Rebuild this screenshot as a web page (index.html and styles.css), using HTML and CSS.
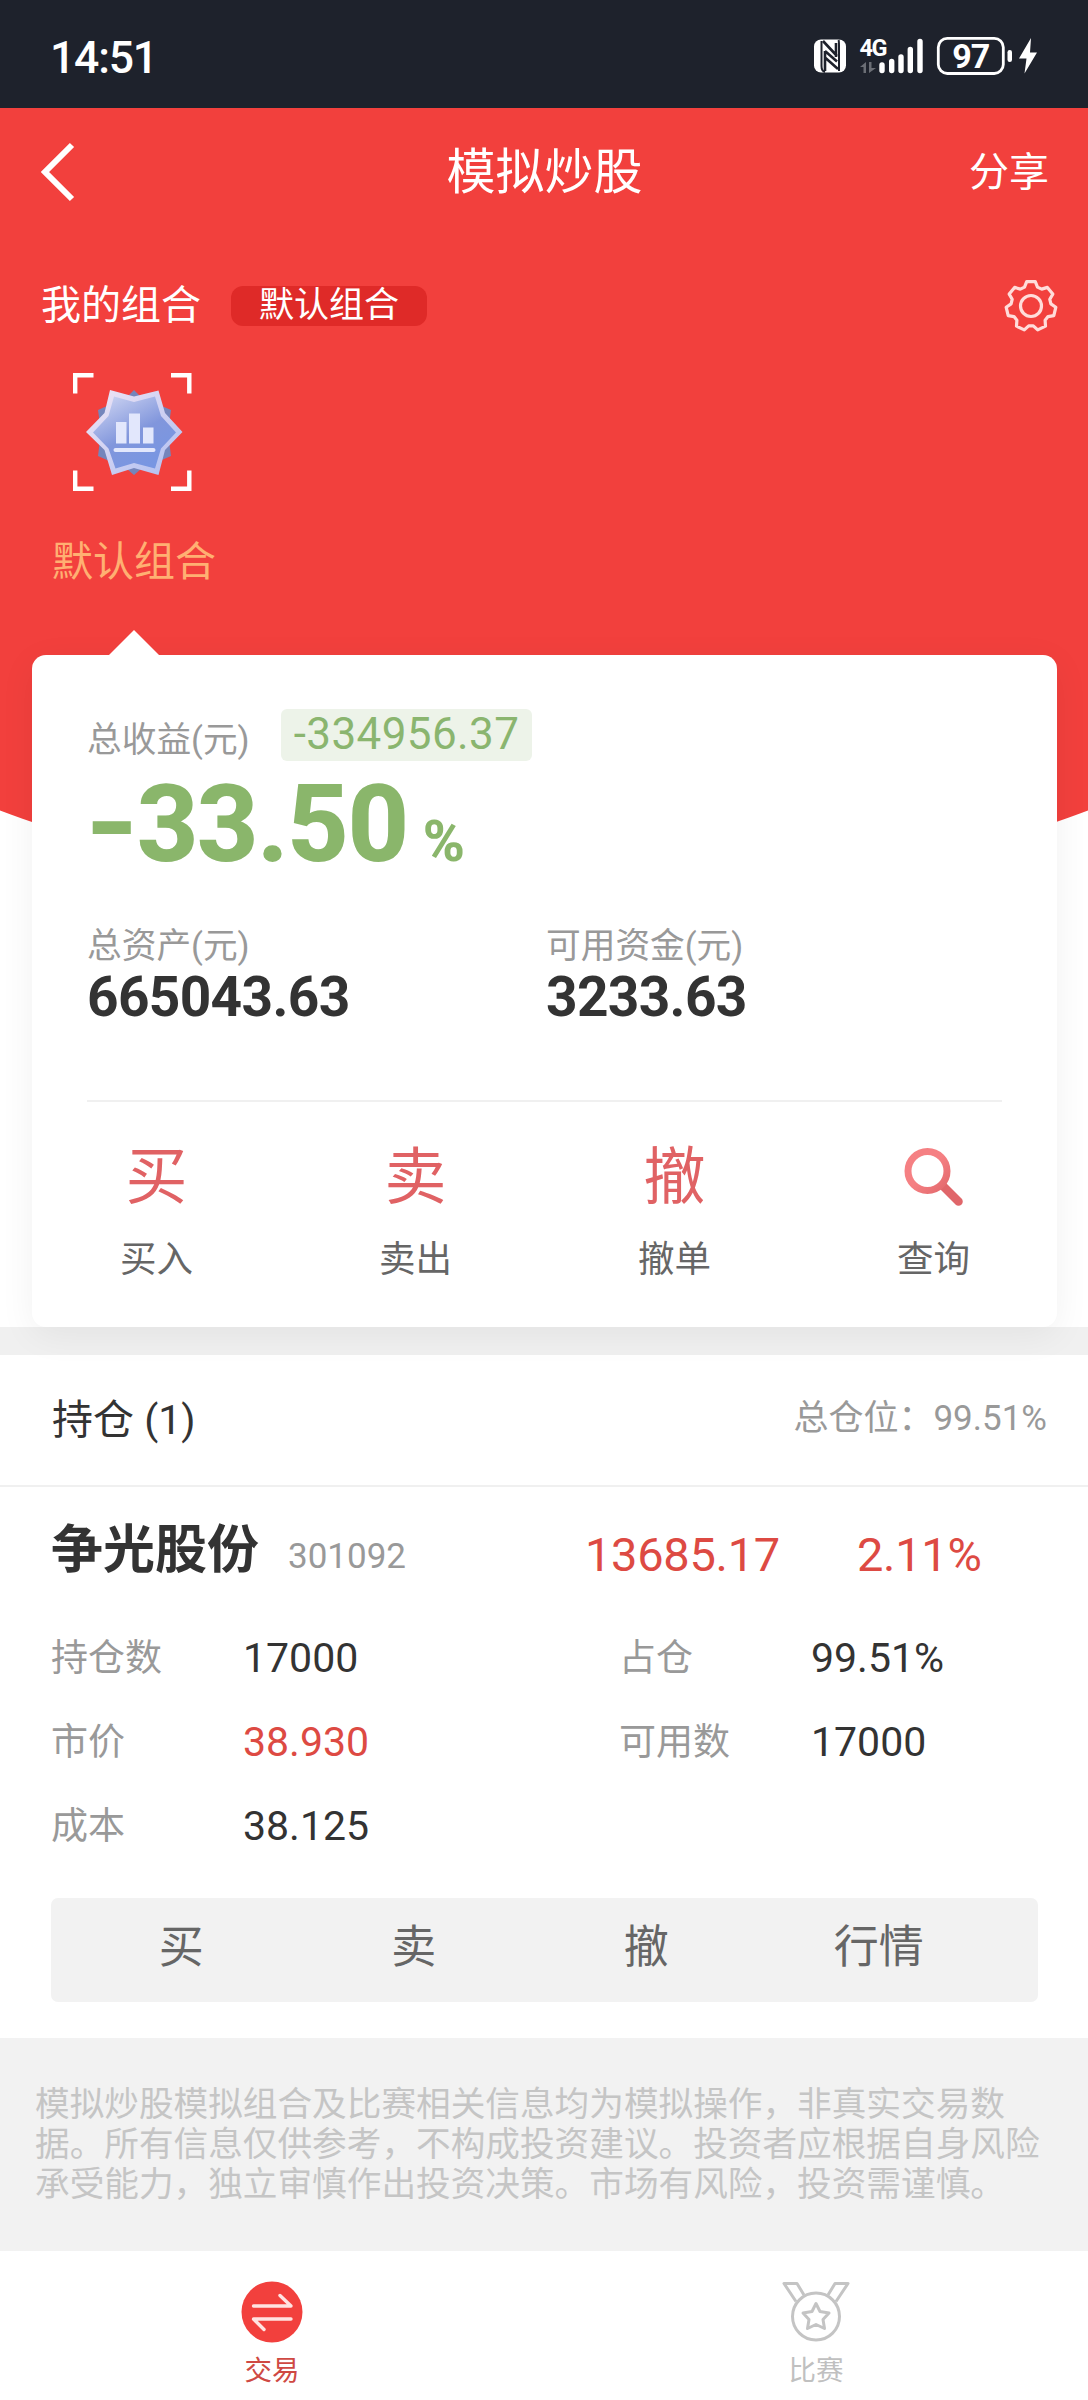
FILE: index.html
```
<!DOCTYPE html>
<html lang="zh-CN">
  <head>
    <meta charset="utf-8">
    <title>模拟炒股</title>
    <meta name="viewport" content="width=device-width, initial-scale=1.0">
    <link rel="stylesheet" href="styles.css">
  </head>
  <body>
    <div class="mainbody">
      <div class="statusbar">
        <span class="clock">14:51</span>
        <svg class="statusicons" width="228" height="50" viewBox="811 31 228 50">
          <!-- nfc -->
          <rect x="814" y="39.500" width="32" height="33" rx="7" fill="#fff"/>
          <path d="M821.500 41V66Q821.500 71 825 72M838.500 40Q839 41 839 46V71" stroke="#1e222c" stroke-width="2" fill="none"/>
          <path d="M823 41L837 56M825 51V71M825 51L837 61.500M825 57.500L838 69M836 43V57" stroke="#1e222c" stroke-width="2.600" fill="none"/>
          <!-- signal -->
          <text x="859.500" y="56" class="net">4G</text>
          <path d="M860 67L866 62V73H863.500V67ZM869 62H871.500V68H876L869 73Z" fill="#6b6e75"/>
          <path d="M882 65V70.500M891.700 61.500V70.500M901 57V70.500M910.300 49.500V70.500M920 41.500V70.500" stroke="#fff" stroke-width="5.400" stroke-linecap="round"/>
          <!-- battery -->
          <rect x="938.300" y="38.300" width="65" height="35.200" rx="9" fill="none" stroke="#fff" stroke-width="2.800"/>
          <rect x="1007.500" y="50" width="4.500" height="12" rx="2.200" fill="#fff"/>
          <text x="970.800" y="68" class="level">97</text>
          <path d="M1031 38L1019 58.500H1026.500L1024.500 73.500L1037 52.500H1030Z" fill="#fff"/>
        </svg>
      </div>

      <div class="hero">
        <div class="header">
          <svg class="back" width="36" height="60" viewBox="0 0 36 60"><path d="M32 3L5 30L32 57" fill="none" stroke="#fff" stroke-width="6"/></svg>
          <div class="title">模拟炒股</div>
          <div class="share">分享</div>
        </div>
        <div class="mygroup">
          <span class="grouptitle">我的组合</span>
          <span class="grouptag">默认组合</span>
          <svg class="gear" width="54" height="54" viewBox="-27 -27 54 54" fill="none" stroke="#ffdcda" stroke-width="3.200">
            <circle r="10.500"/>
            <path stroke-linejoin="round" d="M-4.300 -24.400H4.300L6.500 -18.900L10.700 -16.900L16.400 -18.600L21.800 -11.900L18.800 -6.700L19.900 -2.100L24.800 1.300L22.800 9.600L17 10.600L14.100 14.200L14.500 20.100L6.700 23.900L2.300 19.900H-2.300L-6.700 23.900L-14.500 20.100L-14.100 14.200L-17 10.600L-22.800 9.600L-24.800 1.300L-19.900 -2.100L-18.800 -6.700L-21.800 -11.900L-16.400 -18.600L-10.700 -16.900L-6.500 -18.900Z"/>
          </svg>
        </div>
        <div class="groupitem">
          <svg width="124" height="120" viewBox="71 372 124 120">
            <defs>
              <linearGradient id="face" x1="0" y1="0" x2=".6" y2="1"><stop offset="0" stop-color="#d5daf4"/><stop offset=".6" stop-color="#8196dc"/><stop offset="1" stop-color="#7896e2"/></linearGradient>
              <linearGradient id="rim" x1="0" y1="0" x2="1" y2="1"><stop offset="0" stop-color="#f2e6f5"/><stop offset="1" stop-color="#adbdf0"/></linearGradient>
            </defs>
            <path d="M92.500 375.200H74.200V393.500M170 375.200H188.300V393.500M74.200 470.500V488.800H92.500M188.300 470.500V488.800H170" fill="none" stroke="#fff" stroke-width="4.400"/>
            <path d="M133 390L140 397L170 410L167 432L170 456L140 469L133 475L126 469L97 456L100 432L97 410L126 397Z" fill="#7585bb"/>
            <path d="M109 390L133 396.500L157.500 390.500L164 413L181.500 432L164 450L157.500 475L133 468L111 475L103.500 450L85 432L103.500 413Z" fill="url(#rim)"/>
            <path d="M113 396.500L133 402L154 396.500L160 416L175 432.500L160 448.500L154 468.500L133 463L114.500 468.500L107.500 448.500L92 432.500L107.500 416Z" fill="url(#face)"/>
            <path d="M115 422H125.500V443.500H115ZM128 413.500H139V443.500H128ZM142 427.500H152.500V443.500H142Z" fill="#e2e7fc"/>
            <path d="M114.500 450H152.500" stroke="#e2e7fc" stroke-width="4" stroke-linecap="round"/>
          </svg>
          <span class="groupname">默认组合</span>
        </div>
      </div>

      <div class="card">
        <div class="profitrow">
          <span class="label">总收益(元)</span>
          <span class="profit">-334956.37</span>
        </div>
        <div class="rate"><span class="ratenum"><span class="sign">-</span>33.50</span><span class="percent">%</span></div>
        <div class="assets">
          <div>
            <div class="label">总资产(元)</div>
            <div class="money">665043.63</div>
          </div>
          <div>
            <div class="label">可用资金(元)</div>
            <div class="money">3233.63</div>
          </div>
        </div>
        <div class="actions">
          <div class="action"><span class="glyph">买</span><span class="name">买入</span></div>
          <div class="action"><span class="glyph">卖</span><span class="name">卖出</span></div>
          <div class="action"><span class="glyph">撤</span><span class="name">撤单</span></div>
          <div class="action">
            <span class="glyph">
              <svg width="62" height="62" viewBox="0 2 62 62" fill="none">
                <defs><linearGradient id="lens" x1="0" y1="0" x2="1" y2="1"><stop offset=".5" stop-color="#f58083"/><stop offset="1" stop-color="#e2686c"/></linearGradient></defs>
                <path d="M40 41L55.500 56.500" stroke="#e0666a" stroke-width="8.500" stroke-linecap="round"/>
                <circle cx="24.500" cy="26" r="19.500" stroke="url(#lens)" stroke-width="7"/>
              </svg>
            </span>
            <span class="name">查询</span>
          </div>
        </div>
      </div>

      <div class="holdhead">
        <span class="holdtitle">持仓 (1)</span>
        <span class="holdrate">总仓位：99.51%</span>
      </div>
      <div class="stock">
        <div class="stockhead">
          <span class="stockname">争光股份</span>
          <span class="stockcode">301092</span>
          <span class="gain">13685.17</span>
          <span class="gainrate">2.11%</span>
        </div>
        <div class="details">
          <span class="key">持仓数</span><span>17000</span><span class="key">占仓</span><span>99.51%</span>
          <span class="key">市价</span><span class="red">38.930</span><span class="key">可用数</span><span>17000</span>
          <span class="key">成本</span><span>38.125</span>
        </div>
        <div class="buttons">
          <span>买</span><span>卖</span><span>撤</span><span>行情</span>
        </div>
      </div>
      <div class="notice">模拟炒股模拟组合及比赛相关信息均为模拟操作，非真实交易数<br>据。所有信息仅供参考，不构成投资建议。投资者应根据自身风险<br>承受能力，独立审慎作出投资决策。市场有风险，投资需谨慎。</div>

      <div class="tabbar">
        <div class="tab active">
          <svg width="68" height="62" viewBox="0 0 68 62">
            <circle cx="34" cy="31" r="30.500" fill="#f2403d"/>
            <path d="M15.500 25H53L42 14.500M53 38H15.500L26 48.500" fill="none" stroke="#ffe3e1" stroke-width="3.400" stroke-linecap="round" stroke-linejoin="round"/>
          </svg>
          <span>交易</span>
        </div>
        <div class="tab">
          <svg width="68" height="62" viewBox="0 0 68 62" fill="none" stroke="#c4c4c4" stroke-width="3" stroke-linejoin="round">
            <path d="M14 20.500L2 2.500H15L22 14M54 20.500L66 2.500H53L46 14"/>
            <circle cx="34" cy="35.500" r="23.500"/>
            <path d="M34 22.500L38 30.500L47 32L41 38.500L42.500 47.500L34 43.500L25.500 47.500L27 38.500L21 32L30 30.500Z"/>
          </svg>
          <span>比赛</span>
        </div>
      </div>
    </div>
  </body>
</html>
```

FILE: styles.css
```
*{box-sizing:border-box;margin:0;padding:0;}
body{font-family:Roboto,"Noto Sans CJK SC",sans-serif;color:#333;background:#fff;}
svg{display:block;}
.mainbody{width:1088px;height:2400px;overflow:hidden;background:#fff;}

.statusbar{height:108px;background:#1e222c;color:#fff;display:flex;align-items:flex-start;justify-content:space-between;padding:31px 49px 0 50px;}
.clock{font-size:44.5px;line-height:54px;font-weight:500;letter-spacing:-1.2px;}
.net{font-size:23.5px;font-weight:700;fill:#fff;letter-spacing:-1.5px;}
.level{font-size:34px;font-weight:700;fill:#fff;text-anchor:middle;letter-spacing:-1px;}

.hero{height:547px;position:relative;z-index:0;color:#fff;}
.hero::before{content:"";position:absolute;z-index:-1;left:0;top:0;width:100%;height:802px;background:#f2403d;clip-path:circle(1550px at 50% -749px);}
.header{height:127px;display:grid;grid-template-columns:200px 1fr 200px;align-items:center;padding:0 39px 0 40px;}
.title{text-align:center;font-size:49px;line-height:60px;padding-top:3px;}
.share{text-align:right;font-size:40px;line-height:60px;padding-top:2px;}
.mygroup{height:60px;margin-top:41px;padding:0 30px 0 41px;display:flex;align-items:center;}
.grouptitle{font-size:40px;line-height:62px;}
.grouptag{margin-left:30px;width:196px;height:40px;border-radius:12px;background:#df2a28;text-align:center;font-size:35px;line-height:39px;}
.gear{margin-left:auto;}
.groupitem{width:164px;margin:36px 0 0 52px;display:flex;flex-direction:column;align-items:center;}
.groupname{margin-top:40px;font-size:41px;line-height:60px;color:#ffb072;white-space:nowrap;}

.card{position:relative;z-index:1;width:1025px;height:672px;margin:0 0 0 32px;padding:54px 55px 0;border-radius:14px;background:#fff;box-shadow:0 8px 36px rgba(0,0,0,.06);}
.card::before{content:"";position:absolute;left:77px;top:-25px;border:25px solid transparent;border-top:0;border-bottom-color:#fff;}
.label{font-size:34.7px;line-height:50px;color:#999;}
.profitrow{display:flex;height:52px;}
.profitrow .label{line-height:62px;width:194px;white-space:nowrap;}
.profit{width:251px;border-radius:6px;background:#edf3e9;color:#8ab56f;font-size:44px;line-height:50px;text-align:center;letter-spacing:.4px;}
.rate{height:126px;display:flex;align-items:baseline;color:#8ab66b;font-weight:800;}
.ratenum{font-size:107px;line-height:128px;letter-spacing:-1.5px;}
.sign{display:inline-block;margin:0 9px 0 -3px;transform:scaleX(1.25);transform-origin:left;}
.percent{font-size:57px;margin-left:15px;letter-spacing:-1px;}
.assets{display:grid;grid-template-columns:459px 1fr;height:179px;margin-top:34px;}
.money{font-size:55px;line-height:52px;font-weight:700;letter-spacing:-.65px;}
.actions{display:flex;border-top:2px solid #f0f0f0;}
.action{flex:0 0 259px;height:200px;display:flex;flex-direction:column;align-items:center;}
.action:first-child{margin-left:-60px;}
.glyph{height:80px;margin-top:36px;font-size:62px;line-height:80px;color:#e06264;display:flex;align-items:center;}
.name{margin-top:16px;font-size:36.5px;line-height:52px;color:#666;}

.holdhead{height:160px;border-top:28px solid #f0f0f0;border-bottom:2px solid #f0f0f0;display:flex;align-items:center;justify-content:space-between;padding:0 41px 0 52px;line-height:60px;}
.holdtitle{font-size:41px;}
.holdrate{font-size:35px;color:#999;padding-bottom:3px;}
.stock{height:551px;padding:32px 50px 0 51px;}
.stockhead{display:flex;align-items:baseline;height:97px;line-height:64px;}
.stockname{font-size:52px;font-weight:700;width:237px;}
.stockcode{font-size:35px;color:#999;width:297px;}
.gain,.gainrate,.red{color:#dd4a43;}
.gain,.gainrate{font-size:47px;position:relative;top:3px;letter-spacing:-.3px;}
.gain{width:272px;}
.details{display:grid;grid-template-columns:192px 376px 192px 1fr;grid-auto-rows:84px;align-items:center;font-size:41px;line-height:60px;}
.key{font-size:37px;color:#999;padding-top:2px;}
.buttons{height:104px;margin-top:30px;padding:0 43px 0 14px;border-radius:7px;background:#f2f2f2;display:flex;font-size:45px;line-height:100px;color:#666;}
.buttons span{flex:1;text-align:center;}
.notice{height:213px;padding:46px 0 0 35px;background:#f2f2f2;color:#c5c5c5;font-size:34.65px;line-height:40px;white-space:nowrap;}

.tabbar{height:149px;display:flex;}
.tab{flex:1;display:flex;flex-direction:column;align-items:center;padding-top:30px;font-size:27.5px;line-height:40px;color:#c0c0c0;}
.tab span{margin-top:8px;}
.active{color:#cf4943;}
```
